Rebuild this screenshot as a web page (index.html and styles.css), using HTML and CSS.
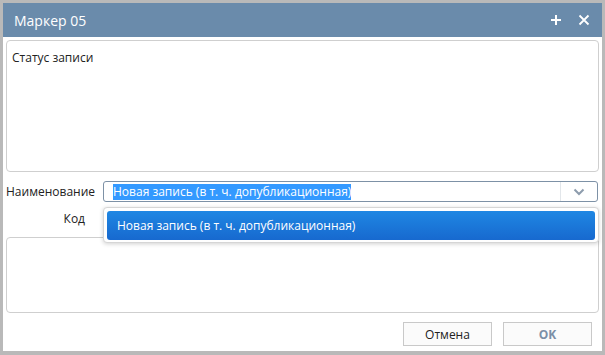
FILE: index.html
```html
<!DOCTYPE html>
<html lang="ru">
<head>
    <meta charset="UTF-8">
    <title>Маркер 05</title>
    <link rel="stylesheet" href="styles.css">
</head>
<body>

<div class="window">
    <div class="titlebar">
        <span class="title">Маркер 05</span>
        <span class="title-btn">
            <svg width="12" height="12" viewBox="0 0 12 12"><path d="M6 1v10M1 6h10" stroke="#fff" stroke-width="2"/></svg>
        </span>
        <span class="title-btn">
            <svg width="12" height="12" viewBox="0 0 12 12"><path d="M1.5 1.5l9 9M10.5 1.5l-9 9" stroke="#fff" stroke-width="1.8"/></svg>
        </span>
    </div>

    <div class="content">
        <div class="box status-box">Статус записи</div>

        <div class="form-row">
            <label class="row-label">Наименование</label>
            <div class="combo">
                <div class="combo-text"><span class="selected">Новая запись (в т. ч. допубликационная)</span></div>
                <div class="combo-btn">
                    <svg width="12" height="8" viewBox="0 0 12 8"><path d="M1.5 1.5l4.5 4.5 4.5-4.5" fill="none" stroke="#8d9cad" stroke-width="2"/></svg>
                </div>
            </div>
        </div>

        <div class="form-row code-row">
            <label class="row-label">Код</label>
            <div class="code-field"></div>
        </div>

        <div class="box notes-box"></div>

        <div class="buttons">
            <button class="btn">Отмена</button>
            <button class="btn btn-ok">OK</button>
        </div>

        <!-- open list of the combo -->
        <div class="dropdown">
            <div class="dropdown-item">Новая запись (в т. ч. допубликационная)</div>
        </div>
    </div>
</div>

</body>
</html>
```

FILE: styles.css
```css
body {
    margin: 0;
    background-color: #b9b9b9;
    font-family: "Open Sans", "Noto Sans", sans-serif;
    font-size: 12px;
    color: #222;
}
.window {
    margin: 3px 3px 0 3px;
    width: 599px;
    height: 348px;
    background-color: #fff;
    display: flex;
    flex-direction: column;
}
.titlebar {
    height: 34px;
    background-color: #6a8bab;
    display: flex;
    align-items: center;
    padding: 0 4px 0 11px;
    color: #fff;
}
.title {
    flex: 1;
    font-size: 14px;
}
.title-btn {
    width: 28px;
    display: flex;
    justify-content: center;
}
.content {
    position: relative;
    flex: 1;
    padding: 3px;
    display: flex;
    flex-direction: column;
}
.box {
    border: 1px solid #cfcfcf;
    border-radius: 4px;
}
.status-box {
    padding: 8px 5px;
    box-sizing: border-box;
    height: 132px;
}
.form-row {
    display: flex;
    align-items: center;
    height: 21px;
    margin-top: 9px;
}
.row-label {
    width: 97px;
    box-sizing: border-box;
    padding-right: 8px;
    text-align: right;
}
.code-row {
    margin-top: 5px;
    height: 22px;
}
.code-row .row-label {
    padding-right: 18px;
}
.combo {
    flex: 1;
    height: 21px;
    box-sizing: border-box;
    border: 1px solid #7d91a6;
    border-radius: 3px;
    display: flex;
    margin-right: 1px;
}
.combo-text {
    flex: 1;
    padding-left: 9px;
    display: flex;
    align-items: center;
}
.selected {
    background-color: #3399ff;
    color: #fff;
    line-height: 16px;
}
.combo-btn {
    width: 36px;
    border-left: 1px solid #e2e6ea;
    display: flex;
    align-items: center;
    justify-content: center;
}
.notes-box {
    height: 74px;
    margin-top: 8px;
}
.buttons {
    display: flex;
    justify-content: flex-end;
    gap: 11px;
    margin-top: 9px;
    padding-right: 7px;
}
.btn {
    width: 89px;
    height: 24px;
    border: 1px solid #c9c9c9;
    background-color: #fbfbfb;
    font-family: inherit;
    font-size: 12px;
    color: #222;
}
.btn-ok {
    color: #7b8fa7;
    font-weight: bold;
}
.dropdown {
    position: absolute;
    left: 100px;
    top: 170px;
    width: 496px;
    height: 36px;
    box-sizing: border-box;
    background-color: #fff;
    border: 1px solid #d6d6d6;
    border-radius: 4px;
    box-shadow: 0 1px 4px rgba(0, 0, 0, 0.18);
    padding: 3px;
}
.dropdown-item {
    height: 29px;
    border-radius: 3px;
    background: linear-gradient(#1f87e3, #1769cf);
    color: #fff;
    padding-left: 10px;
    display: flex;
    align-items: center;
}
```
